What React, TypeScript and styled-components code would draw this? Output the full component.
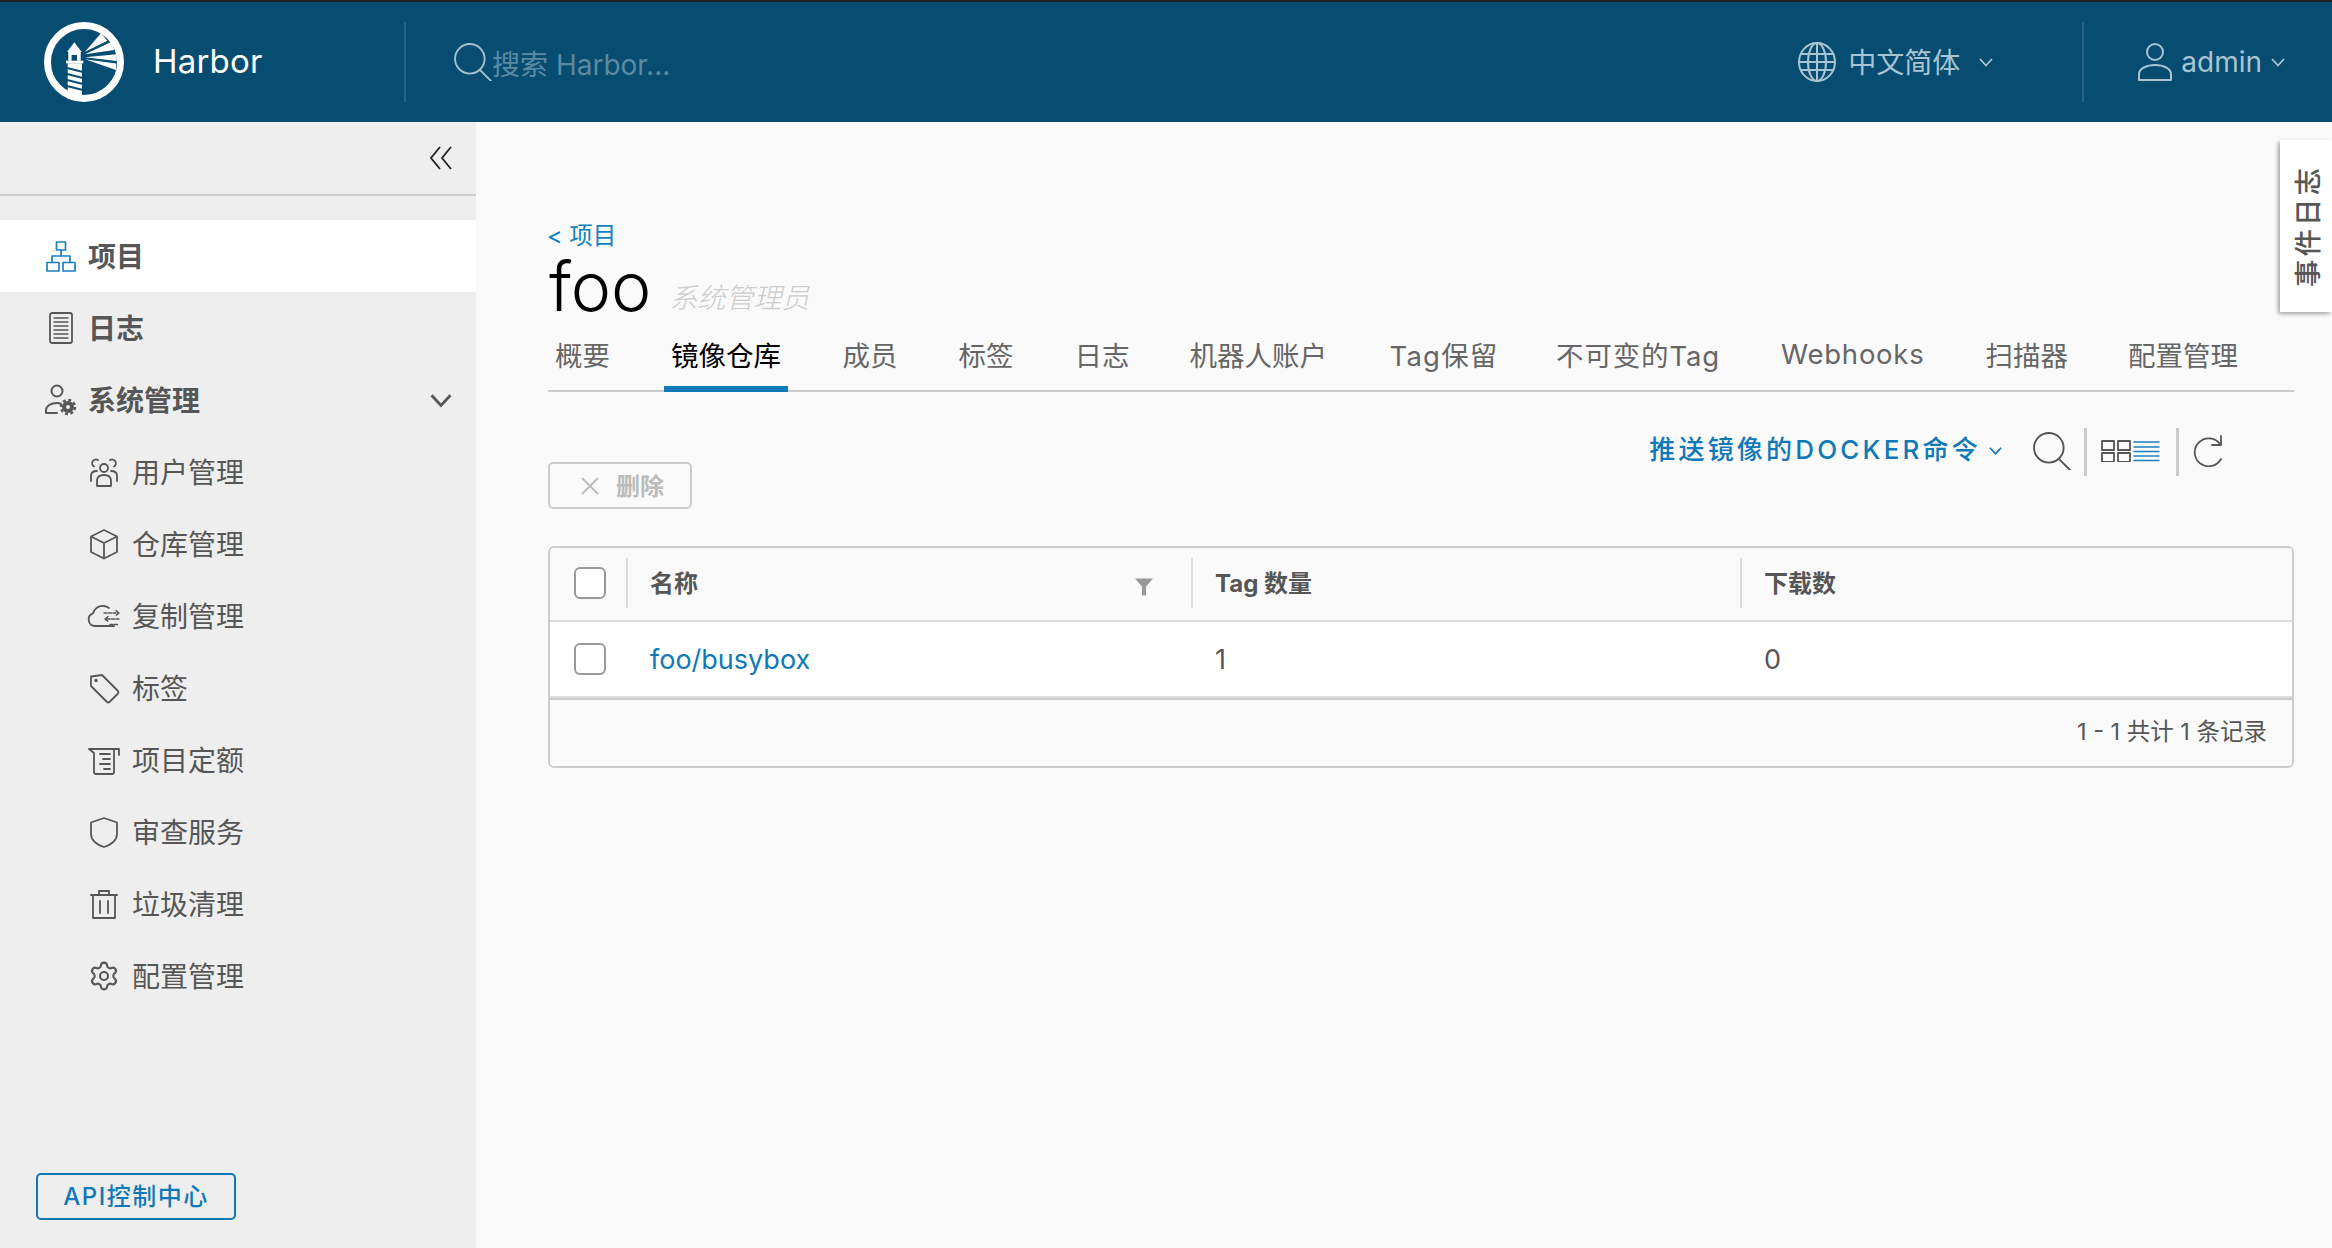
import React from "react";
import styled, { createGlobalStyle } from "styled-components";
import { Settings } from "lucide-react";

const Global = createGlobalStyle`
  html, body { margin: 0; padding: 0; height: 100%; }
  body { font-family: Inter, "Noto Sans CJK SC", sans-serif; color: #565656; background: #fafafa; overflow: hidden; }
  * { box-sizing: border-box; }
`;

const Page = styled.div`display:flex;flex-direction:column;width:2332px;height:1248px;position:relative;`;
const Header = styled.header`
  display:flex;align-items:center;height:122px;flex:none;background:#074d71;border-top:2px solid #222;
`;
const Brand = styled.div`display:flex;align-items:center;width:404px;height:80px;padding-left:44px;border-right:0;`;
const BrandName = styled.span`margin-left:29px;padding-bottom:2px;font-size:33px;letter-spacing:.2px;color:#fff;line-height:1;`;
const HeadDivider = styled.div`width:2px;height:80px;background:#2a6485;flex:none;`;
const SearchBox = styled.div`display:flex;align-items:center;flex:1;padding-left:48px;color:#a4bfcd;height:80px;`;
const Placeholder = styled.span`font-size:28px;color:#5b8aa3;position:relative;top:1px;`;
const Lang = styled.div`display:flex;align-items:center;color:#a9c4d3;font-size:28px;margin-right:89px;`;
const LangText = styled.span`margin-left:12px;margin-right:19px;padding-bottom:2px;`;
const User = styled.div`display:flex;align-items:center;color:#a9c4d3;font-size:28px;margin-left:53px;margin-right:47px;`;
const UserName = styled.span`margin-left:8px;margin-right:9px;`;

const Body = styled.div`display:flex;flex:1;min-height:0;`;
const Sidebar = styled.aside`display:flex;flex-direction:column;width:476px;flex:none;background:#eee;padding-bottom:28px;`;
const Collapse = styled.div`
  display:flex;align-items:center;justify-content:flex-end;height:74px;padding:0 24px 0 0;border-bottom:2px solid #ccc;color:#222;
`;
const Nav = styled.nav`display:flex;flex-direction:column;margin-top:24px;`;
const NavItem = styled.div<{ $active?: boolean; $sub?: boolean }>`
  display:flex;align-items:center;height:72px;flex:none;
  padding-left:${p => (p.$sub ? 86 : 43)}px;padding-right:24px;
  background:${p => (p.$active ? "#fff" : "transparent")};
  font-size:28px;font-weight:${p => (p.$sub ? 400 : 700)};color:#565656;
`;
const NavIcon = styled.span<{ $blue?: boolean; $sub?: boolean }>`
  display:flex;width:36px;height:36px;margin-right:${p => (p.$sub ? 10 : 9)}px;flex:none;align-items:center;justify-content:center;
  color:${p => (p.$blue ? "#1b80c2" : "#565656")};
`;
const NavLabel = styled.span`flex:1;padding-bottom:3px;`;
const ApiButton = styled.button`
  margin:auto 0 0 36px;width:200px;height:47px;border:2px solid #0f79b8;border-radius:5px;background:transparent;
  color:#0f79b8;font:500 24px Inter,"Noto Sans CJK SC",sans-serif;letter-spacing:1.500px;padding:0 0 5px;
`;

const Content = styled.main`flex:1;min-width:0;padding:99px 38px 0 72px;background:#fafafa;`;
const Back = styled.div`height:30px;line-height:30px;font-size:23.5px;color:#1381bf;margin-left:-1px;`;
const TitleRow = styled.div`display:flex;align-items:baseline;height:70px;`;
const Title = styled.h1`margin:0 0 0 1px;font-size:68px;font-weight:300;color:#000;line-height:70px;`;
const Role = styled.span`margin-left:18px;font-size:28px;font-style:italic;color:#ccc;font-weight:300;position:relative;top:-3px;`;
const Tabs = styled.div`display:flex;height:71px;border-bottom:2px solid #ccc;padding-left:0;`;
const Tab = styled.div<{ $active?: boolean; $gap: number; $ls: number }>`
  display:flex;align-items:center;height:71px;padding:0 7px 6px;margin-right:${p => p.$gap}px;font-size:27.5px;white-space:nowrap;
  letter-spacing:${p => p.$ls}px;
  color:${p => (p.$active ? "#000" : "#666")};
  box-shadow:${p => (p.$active ? "inset 0 -6px 0 #0f79b8" : "none")};
`;
const Toolbar = styled.div`display:flex;justify-content:space-between;align-items:flex-end;height:81px;margin-top:36px;`;
const DeleteButton = styled.button`
  display:flex;align-items:center;width:144px;height:47px;padding:0 0 0 31px;border:2px solid #ccc;border-radius:5px;background:transparent;
  color:#bbb;font:600 24px Inter,"Noto Sans CJK SC",sans-serif;
`;
const DeleteLabel = styled.span`margin-left:17px;padding-bottom:3px;`;
const Actions = styled.div`display:flex;align-items:flex-start;align-self:flex-start;height:48px;padding-right:69px;color:#565656;`;
const PushCmd = styled.span`font-size:26px;font-weight:500;line-height:44px;color:#0f79b8;letter-spacing:3.2px;white-space:nowrap;`;
const PushChevron = styled.span`display:flex;color:#0f79b8;margin:16px 31px 0 8px;`;
const ActionIcon = styled.span<{ $top: number; $blue?: boolean; $left?: number }>`
  display:flex;margin-top:${p => p.$top}px;margin-left:${p => p.$left ?? 0}px;color:${p => (p.$blue ? "#1b80c2" : "#565656")};
`;
const ActionDivider = styled.div<{ $l: number; $r: number }>`
  width:3px;height:48px;background:#ccc;flex:none;margin:0 ${p => p.$r}px 0 ${p => p.$l}px;
`;

const Table = styled.section`margin-top:37px;border:2px solid #ccc;border-radius:6px;overflow:hidden;height:222px;`;
const Row = styled.div<{ $head?: boolean }>`
  display:grid;grid-template-columns:76px 565px 549px 1fr;align-items:center;
  height:${p => (p.$head ? 74 : 76)}px;
  padding-bottom:${p => (p.$head ? 2 : 0)}px;
  background:${p => (p.$head ? "#fafafa" : "#fff")};border-bottom:2px solid #ddd;
`;
const CheckCell = styled.div`display:flex;padding-left:24px;`;
const Check = styled.span`display:block;width:32px;height:32px;border:2px solid #999;border-radius:6px;background:#fff;`;
const HeadCell = styled.div`
  display:flex;align-items:center;justify-content:space-between;height:50px;padding:0 37px 3px 22px;
  border-left:2px solid #ddd;font-size:24px;font-weight:700;color:#565656;
`;
const FilterMark = styled.span`display:flex;margin-top:11px;`;
const Cell = styled.div`padding-left:24px;font-size:27px;color:#565656;`;
const RepoLink = styled.span`color:#0f79b8;`;
const Footer = styled.div`
  display:flex;align-items:center;justify-content:flex-end;height:68px;padding:0 25px 7px 0;border-top:2px solid #ccc;font-size:23.5px;background:#fafafa;
`;
const EventTab = styled.div`
  position:absolute;top:140px;right:0;width:52px;height:172px;display:flex;align-items:center;justify-content:center;
  background:#fff;box-shadow:-2px 2px 4px rgba(0,0,0,.35);
`;
const EventLabel = styled.span`
  writing-mode:vertical-rl;text-orientation:sideways;transform:rotate(180deg);font-size:27.5px;font-weight:500;letter-spacing:3px;color:#565656;
`;

type IconProps = { w?: number; h?: number; vb?: string; children: React.ReactNode; sw?: number };
const Ic = ({ w = 36, h = 36, vb, children, sw = 2 }: IconProps) => (
  <svg width={w} height={h} viewBox={vb ?? `0 0 ${w} ${h}`} fill="none" stroke="currentColor" strokeWidth={sw} strokeLinejoin="round" strokeLinecap="round">
    {children}
  </svg>
);

const Logo = () => (
  <svg width="80" height="80" viewBox="0 0 80 80">
    <circle cx="40" cy="40" r="36.5" fill="none" stroke="#fff" strokeWidth="7" />
    <g fill="#fff">
      <path d="M41 29.7 57 11.3 63.3 18.7Z" />
      <path d="M41 32.3 67.7 19.7 70.3 28Z" />
      <path d="M41 35.3 72.7 32.3V39Z" />
      <path d="M41 37.3 72 41.5V48Z" />
      <path d="M30.3 20.3 37.7 30H23Z" />
      <path fillRule="evenodd" d="M24.3 30H36.7V38.7H24.3ZM27.6 33V38.7H33V33Z" />
      <path d="M22 38.7H39.3V41.3H22Z" />
      <path d="M23.7 41.3H38V75.5L23.7 71Z" />
    </g>
    <g stroke="#074d71" strokeWidth="2" fill="none">
      <path d="M23 46 39 50M23 52 39 56M23 58 39 62M23 64 39 68" />
    </g>
  </svg>
);

const SearchIcon = () => (
  <Ic w={38} h={38} vb="0 0 36 36" sw={1.8}><circle cx="15" cy="15" r="14" /><path d="M25 26 35 36" /></Ic>
);
const Chevron = ({ s = 14 }: { s?: number }) => (
  <svg width={s} height={s} viewBox="0 0 14 14" fill="none" stroke="currentColor" strokeWidth="1.8"><path d="M1 4 7 10.5 13 4" /></svg>
);
const Globe = () => (
  <Ic w={38} h={40} vb="0 0 38 40">
    <ellipse cx="19" cy="20" rx="18" ry="19" />
    <ellipse cx="19" cy="20" rx="9" ry="19" />
    <path d="M19 1V39M3 12H35M1 20H37M3 28H35" />
  </Ic>
);
const UserIcon = () => (
  <Ic w={36} h={40}>
    <circle cx="18" cy="10" r="8" />
    <path d="M2 38v-6c0-5 7-9 16-9s16 4 16 9v6Z" />
  </Ic>
);
const OrgIcon = () => (
  <Ic sw={1.7}><rect x="13.500" y="4" width="9" height="8" /><rect x="4" y="24.500" width="12" height="8.500" /><rect x="20" y="24.500" width="12" height="8.500" /><path d="M18 12V18M9 24V18H27V24" /></Ic>
);
const LogIcon = () => (
  <Ic sw={1.8}><rect x="7" y="3" width="22" height="30" rx="2" /><path strokeWidth="1.3" d="M11 8H25M11 12H25M11 16H25M11 20H25M11 24H25M11 28H25" /></Ic>
);
const AdminIcon = () => (
  <Ic>
    <circle cx="14" cy="9" r="5.5" />
    <path d="M3 31v-3c0-4 5-7 11-7 1.4 0 2.6.2 3.6.5M3 31H14" />
    <circle cx="25" cy="25" r="4" strokeWidth="4" />
    <circle cx="25" cy="25" r="7" strokeWidth="2.5" strokeDasharray="3 2.5" strokeLinecap="butt" />
  </Ic>
);
const UsersIcon = () => (
  <Ic sw={1.8}>
    <circle cx="18" cy="14" r="4" />
    <path d="M11 32v-5c0-4 3-6 7-6s7 2 7 6v5Z" />
    <path d="M12 6a3.5 3.5 0 0 0-4 6.6M24 6a3.5 3.5 0 0 1 4 6.6M5 27v-5c0-3 2-5 6-5M31 27v-5c0-3-2-5-6-5" />
  </Ic>
);
const CubeIcon = () => (
  <Ic sw={1.8}><path d="M18 4 31 10.5V26L18 32.5 5 26V10.5Z M5 10.5 18 17 31 10.5M18 17V32.5" /></Ic>
);
const CloudIcon = () => (
  <Ic sw={1.8}>
    <path d="M28 28H9a6.5 6.5 0 0 1-2-12.6C9 10 13 7.5 18 8c2 .2 3.6 1 5 2" />
    <path strokeWidth="1.4" d="M18 15H33M30 12.5 33 15 30 17.5M33 21H19M22 18.5 19 21 22 23.5M24 26.5H32" strokeDasharray="3 1.5" />
  </Ic>
);
const TagIcon = () => (
  <Ic sw={1.8}><path d="M5 6.5 16 5 32 21a2 2 0 0 1 0 2.5L23.5 32a2 2 0 0 1-2.500 0L5 16Z" /><circle cx="10" cy="10.500" r=".8" /></Ic>
);
const QuotaIcon = () => (
  <Ic sw={1.8}>
    <path d="M3 7H33V13M3 7 8 11V30a2 2 0 0 0 2 2H26a2 2 0 0 0 2-2V7" />
    <path d="M14 12H24M17 17H24M14 22H24M18 27H24" />
  </Ic>
);
const ShieldIcon = () => (
  <Ic sw={1.8}><path d="M18 4 31 8.500V20C31 27 24 31 18 33 12 31 5 27 5 20V8.500Z" /></Ic>
);
const TrashIcon = () => (
  <Ic sw={1.8}><path d="M5 9H31M7 9V32H29V9M13 9V5H23V9M14 15V27M22 15V27" /></Ic>
);
const FilterIcon = () => (
  <svg width="20" height="19" viewBox="0 0 20 18" fill="#999"><path d="M1 0H19L12 8V17H8V8Z" /></svg>
);
const GridIcon = () => (
  <Ic w={30} h={22} sw={1.8}>
    <rect x="1" y="1" width="12" height="9" /><rect x="17" y="1" width="12" height="9" />
    <rect x="1" y="13" width="12" height="9" /><rect x="17" y="13" width="12" height="9" />
  </Ic>
);
const ListViewIcon = () => (
  <Ic w={27} h={22} sw={1.5}><path d="M1 2H26M1 7H26M1 11.500H26M1 16H26M1 20.500H26" /></Ic>
);
const RefreshIcon = () => (
  <Ic w={32} h={32} sw={1.8}>
    <path d="M27 9A14 14 0 1 0 28 24" /><path d="M28 1V10H19" />
  </Ic>
);

const tabs: [string, number, number][] = [
  ["概要", 47, 0], ["镜像仓库", 47.5, 0], ["成员", 47, 0], ["标签", 47, 0], ["日志", 46, 0], ["机器人账户", 48.500, 0], ["Tag保留", 43.5, 1.2],
  ["不可变的Tag", 47, 0.85], ["Webhooks", 47, 0.75], ["扫描器", 46, 0], ["配置管理", 0, 0],
];
const subs: [React.ReactNode, string][] = [
  [<UsersIcon />, "用户管理"], [<CubeIcon />, "仓库管理"], [<CloudIcon />, "复制管理"], [<TagIcon />, "标签"],
  [<QuotaIcon />, "项目定额"], [<ShieldIcon />, "审查服务"], [<TrashIcon />, "垃圾清理"],
  [<Settings size={32} strokeWidth={1.6} />, "配置管理"],
];

export default function App() {
  return (
    <Page>
      <Global />
      <Header>
        <Brand><Logo /><BrandName>Harbor</BrandName></Brand>
        <HeadDivider />
        <SearchBox><SearchIcon /><Placeholder>搜索 Harbor...</Placeholder></SearchBox>
        <Lang><Globe /><LangText>中文简体</LangText><Chevron /></Lang>
        <HeadDivider />
        <User><UserIcon /><UserName>admin</UserName><Chevron /></User>
      </Header>
      <Body>
        <Sidebar>
          <Collapse>
            <svg width="22" height="24" viewBox="0 0 22 24" fill="none" stroke="currentColor" strokeWidth="1.800"><path d="M10 1 1 12 10 23M21 1 12 12 21 23" /></svg>
          </Collapse>
          <Nav>
            <NavItem $active><NavIcon $blue><OrgIcon /></NavIcon><NavLabel>项目</NavLabel></NavItem>
            <NavItem><NavIcon><LogIcon /></NavIcon><NavLabel>日志</NavLabel></NavItem>
            <NavItem><NavIcon><AdminIcon /></NavIcon><NavLabel>系统管理</NavLabel><Chevron s={22} /></NavItem>
            {subs.map(([icon, label]) => (
              <NavItem $sub key={label}><NavIcon $sub>{icon}</NavIcon><NavLabel>{label}</NavLabel></NavItem>
            ))}
          </Nav>
          <ApiButton>API控制中心</ApiButton>
        </Sidebar>
        <Content>
          <Back>&lt; 项目</Back>
          <TitleRow><Title>foo</Title><Role>系统管理员</Role></TitleRow>
          <Tabs>
            {tabs.map(([t, gap, ls]) => (
              <Tab key={t} $gap={gap} $ls={ls} $active={t === "镜像仓库"}>{t}</Tab>
            ))}
          </Tabs>
          <Toolbar>
            <DeleteButton>
              <svg width="18" height="18" viewBox="0 0 18 18" stroke="#bbb" strokeWidth="1.800" fill="none"><path d="M1 1 17 17M17 1 1 17" /></svg>
              <DeleteLabel>删除</DeleteLabel>
            </DeleteButton>
            <Actions>
              <PushCmd>推送镜像的DOCKER命令</PushCmd>
              <PushChevron><Chevron s={13} /></PushChevron>
              <ActionIcon $top={4}><SearchIcon /></ActionIcon>
              <ActionDivider $l={13} $r={14} />
              <ActionIcon $top={12}><GridIcon /></ActionIcon>
              <ActionIcon $top={12} $left={2} $blue><ListViewIcon /></ActionIcon>
              <ActionDivider $l={16} $r={14} />
              <ActionIcon $top={7}><RefreshIcon /></ActionIcon>
            </Actions>
          </Toolbar>
          <Table>
            <Row $head>
              <CheckCell><Check /></CheckCell>
              <HeadCell>名称<FilterMark><FilterIcon /></FilterMark></HeadCell>
              <HeadCell>Tag 数量</HeadCell>
              <HeadCell>下载数</HeadCell>
            </Row>
            <Row>
              <CheckCell><Check /></CheckCell>
              <Cell><RepoLink>foo/busybox</RepoLink></Cell>
              <Cell>1</Cell>
              <Cell>0</Cell>
            </Row>
            <Footer>1 - 1 共计 1 条记录</Footer>
          </Table>
        </Content>
      </Body>
      <EventTab><EventLabel>事件日志</EventLabel></EventTab>
    </Page>
  );
}
